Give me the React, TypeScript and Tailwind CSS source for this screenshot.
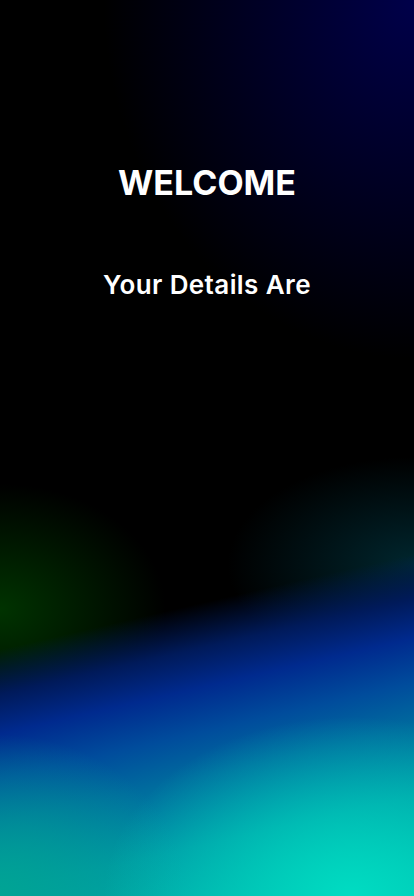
export default function App() {
  return (
    <div className="relative h-[896px] w-full overflow-hidden bg-black bg-[radial-gradient(ellipse_60%_20%_at_85%_100%,#00dcc2_0%,rgba(0,220,194,0)_100%),radial-gradient(ellipse_45%_18%_at_0%_100%,#00a494_0%,rgba(0,164,148,0)_100%),linear-gradient(167deg,rgba(0,0,0,0)_65.5%,#001a5a_70%,#002a8e_74%,#004c9c_78.5%,#006c9e_83%,#0096a4_90%,#00b8aa_100%),radial-gradient(ellipse_40%_14%_at_0%_68%,#003300_0%,rgba(0,0,0,0)_100%),radial-gradient(ellipse_45%_12%_at_100%_63%,#00262e_0%,rgba(0,0,0,0)_100%),radial-gradient(ellipse_75%_40%_at_100%_0%,#00004a_0%,rgba(0,0,0,0)_100%)] font-['Inter',sans-serif] text-white">
      <div className="flex flex-col items-center pt-[162px]">
        <h1 className="text-[34px] font-bold leading-[42px]">WELCOME</h1>
        <p className="mt-[64px] text-[26px] font-semibold leading-[34px] tracking-[0.4px]">Your Details Are</p>
      </div>
    </div>
  );
}
